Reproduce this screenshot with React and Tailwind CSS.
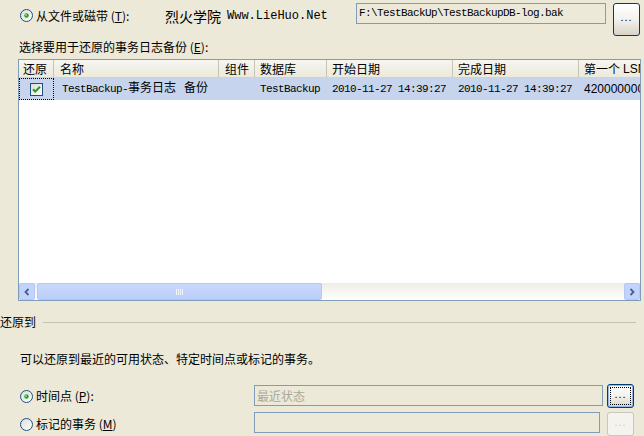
import React from "react";

function Radio({ checked }) {
  return (
    <svg width="13" height="13" viewBox="0 0 13 13" className="shrink-0">
      <defs>
        <linearGradient id={checked ? "rg1" : "rg0"} x1="0" y1="0" x2="1" y2="1">
          <stop offset="0" stopColor="#dcdcd6" />
          <stop offset="1" stopColor="#ffffff" />
        </linearGradient>
      </defs>
      <circle cx="6.5" cy="6.5" r="6" fill={`url(#${checked ? "rg1" : "rg0"})`} stroke="#1c5180" strokeWidth="1" />
      {checked && <circle cx="6.5" cy="6.5" r="2.2" fill="#21a121" />}
      {checked && <circle cx="6" cy="6" r="0.9" fill="#8ee08e" />}
    </svg>
  );
}

function Checkbox() {
  return (
    <svg width="13" height="13" viewBox="0 0 13 13" className="shrink-0">
      <defs>
        <linearGradient id="cbg" x1="0" y1="0" x2="1" y2="1">
          <stop offset="0" stopColor="#dcdcd7" />
          <stop offset="1" stopColor="#ffffff" />
        </linearGradient>
      </defs>
      <rect x="0.5" y="0.5" width="12" height="12" fill="url(#cbg)" stroke="#1c5180" />
      <path d="M3 6.2 L5.2 8.5 L10 3.8" fill="none" stroke="#21a121" strokeWidth="2" />
    </svg>
  );
}

function DotsButton({ focused, disabled, className }) {
  return (
    <div
      className={
        "flex items-center justify-center rounded-[3px] border shrink-0 " +
        (disabled
          ? "border-[#c9c7ba] bg-[#f4f3ee] text-[#c9c7ba] "
          : "border-[#003c74] bg-gradient-to-b from-[#ffffff] via-[#f3f2ec] to-[#d8d3c8] text-black ") +
        (focused ? "shadow-[inset_0_0_0_1px_#98b8ea] " : "") +
        className
      }
    >
      <div
        className={
          "flex items-center justify-center w-[21px] h-[18px] text-[11px] leading-none font-['Liberation_Sans',sans-serif] tracking-[1px] " +
          (focused ? "border border-dotted border-black" : "")
        }
      >
        <span className="-mt-[4px]">...</span>
      </div>
    </div>
  );
}

const mono = "font-['Liberation_Mono','Noto_Sans_CJK_SC',monospace] text-[11px] tracking-[-0.6px]";
const cjk = "font-['Noto_Sans_CJK_SC','Liberation_Sans',sans-serif]";
const hcell = "shrink-0 h-full flex items-center border-l border-[#c7c5b2]";
const rcell = "shrink-0 h-full flex items-center";

export default function App() {
  return (
    <div className={"w-[644px] h-[436px] overflow-hidden bg-[#ece9d8] text-black text-[12px] leading-none " + cjk}>
      {/* Row 1 */}
      <div className="flex items-start h-[38px] pt-[3px]">
        <div className="flex items-center h-[21px] ml-[20px] w-[145px] mt-[2px] shrink-0">
          <Radio checked />
          <span className="ml-[3px]">
            从文件或磁带 (<span className="underline">T</span>):
          </span>
        </div>
        <div className="flex items-center h-[21px] w-[191px] mt-[2px] shrink-0">
          <span className="text-[14px]">烈火学院</span>
          <span className="ml-[6px] font-['Liberation_Mono',monospace] text-[12px]">Www.LieHuo.Net</span>
        </div>
        <div className={"flex items-center w-[250px] h-[21px] border border-[#7f9db9] pl-[2px] shrink-0 " + mono}>
          F:\TestBackUp\TestBackupDB-log.bak
        </div>
        <DotsButton className="ml-[7px] w-[27px] h-[33px]" />
      </div>

      {/* Label */}
      <div className="flex items-center h-[21px] pl-[19px] pb-[3px]">
        选择要用于还原的事务日志备份 (<span className="underline">E</span>):
      </div>

      {/* List */}
      <div className="ml-[18px] w-[623px] h-[242px] border border-[#7f9db9] bg-white flex flex-col overflow-hidden">
        <div className="flex h-[18px] shrink-0 bg-gradient-to-b from-[#f6f5f0] to-[#ebeadb] border-b border-[#d6d2c2] text-[12px] items-center whitespace-nowrap">
          <div className="shrink-0 w-[34px] pl-[4px] h-full flex items-center">还原</div>
          <div className={hcell + " w-[165px] pl-[6px]"}>名称</div>
          <div className={hcell + " w-[36px] pl-[6px]"}>组件</div>
          <div className={hcell + " w-[72px] pl-[5px]"}>数据库</div>
          <div className={hcell + " w-[126px] pl-[5px]"}>开始日期</div>
          <div className={hcell + " w-[126px] pl-[5px]"}>完成日期</div>
          <div className={hcell + " w-[80px] pl-[5px]"}>
            第一个 <span className="ml-[3px] font-['Liberation_Sans',sans-serif]">LSN</span>
          </div>
        </div>
        <div className="flex h-[22px] shrink-0 bg-[#c7d4ed] items-center whitespace-nowrap">
          <div className="shrink-0 w-[35px] h-full flex items-center justify-center border border-dotted border-black">
            <Checkbox />
          </div>
          <div className={rcell + " w-[165px] pl-[8px] " + mono}>
            TestBackup-<span className="text-[12px] tracking-normal">事务日志</span>
            <span className="ml-[8px] text-[12px] tracking-normal">备份</span>
          </div>
          <div className={rcell + " w-[36px]"} />
          <div className={rcell + " w-[72px] pl-[5px] " + mono}>TestBackup</div>
          <div className={rcell + " w-[126px] pl-[5px] " + mono}>2010-11-27 14:39:27</div>
          <div className={rcell + " w-[126px] pl-[5px] " + mono}>2010-11-27 14:39:27</div>
          <div className={rcell + " w-[80px] pl-[5px] font-['Liberation_Sans',sans-serif] text-[12px]"}>
            4200000000
          </div>
        </div>
        <div className="flex-1" />
        <div className="flex h-[17px] shrink-0 bg-gradient-to-b from-[#eeede5] to-[#fefefe] items-stretch">
          <div className="shrink-0 w-[16px] flex items-center justify-center rounded-[2px] border border-[#b4c8f6] bg-[#c2d3fc]">
            <svg width="8" height="8" viewBox="0 0 8 8">
              <path d="M5.5 1 L2.5 4 L5.5 7" fill="none" stroke="#4d6185" strokeWidth="1.8" />
            </svg>
          </div>
          <div className="shrink-0 ml-[2px] w-[285px] flex items-center justify-center rounded-[2px] border border-[#b4c8f6] bg-gradient-to-b from-[#c9d8fc] to-[#bccffa]">
            <svg width="8" height="6" viewBox="0 0 8 6">
              <path d="M0.5 0 V6 M2.5 0 V6 M4.5 0 V6 M6.5 0 V6" stroke="#eef3fe" strokeWidth="1" />
            </svg>
          </div>
          <div className="flex-1" />
          <div className="shrink-0 w-[16px] flex items-center justify-center rounded-[2px] border border-[#b4c8f6] bg-[#c2d3fc]">
            <svg width="8" height="8" viewBox="0 0 8 8">
              <path d="M2.5 1 L5.5 4 L2.5 7" fill="none" stroke="#4d6185" strokeWidth="1.8" />
            </svg>
          </div>
        </div>
      </div>

      {/* Section header */}
      <div className="flex items-center h-[18px] mt-[12px]">
        <span>还原到</span>
        <div className="flex-1 ml-[7px] mr-[8px] h-px bg-[#c5c2b2]" />
      </div>

      {/* Description */}
      <div className="flex items-center h-[16px] mt-[20px] pl-[20px]">
        可以还原到最近的可用状态、特定时间点或标记的事务。
      </div>

      {/* Radio row 1 */}
      <div className="flex items-start h-[24px] mt-[17px]">
        <div className="flex items-center h-[24px] ml-[20px] w-[234px] shrink-0">
          <Radio checked />
          <span className="ml-[3px]">
            时间点 (<span className="underline">P</span>):
          </span>
        </div>
        <div className="shrink-0 mt-[1px] w-[349px] h-[21px] border border-[#7f9db9] flex items-center pl-[2px] text-[#aca899]">
          最近状态
        </div>
        <DotsButton focused className="ml-[4px] w-[27px] h-[24px]" />
      </div>

      {/* Radio row 2 */}
      <div className="flex items-start h-[24px] mt-[4px]">
        <div className="flex items-center h-[24px] ml-[20px] w-[234px] shrink-0">
          <Radio />
          <span className="ml-[3px]">
            标记的事务 (<span className="underline">M</span>)
          </span>
        </div>
        <div className="shrink-0 w-[346px] h-[21px] border border-[#7f9db9]" />
        <DotsButton disabled className="ml-[7px] w-[27px] h-[24px]" />
      </div>
    </div>
  );
}
